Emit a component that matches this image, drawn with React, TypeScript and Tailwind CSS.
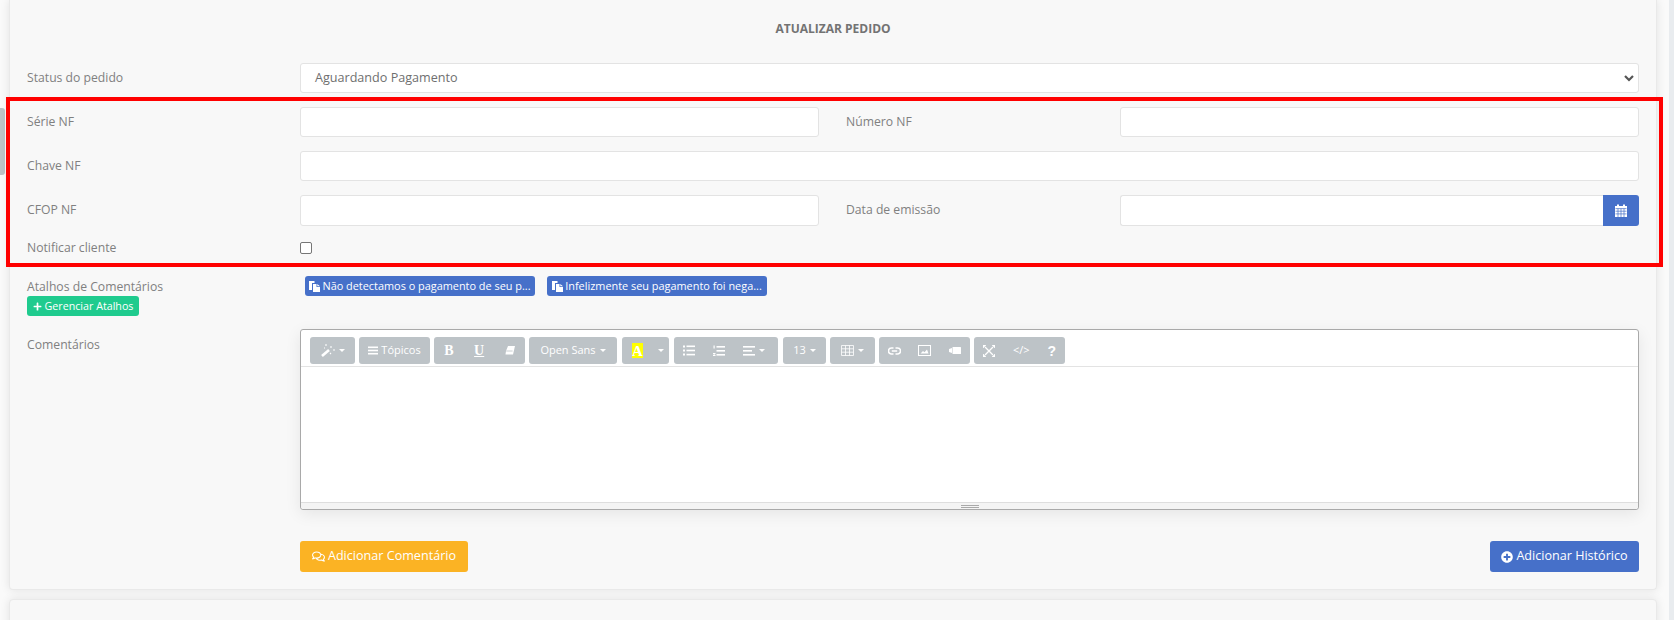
import type { ReactNode } from 'react';
import { FaRegComments, FaPlus, FaPlusCircle } from 'react-icons/fa';

const Caret = () => <span className="ml-[4px] inline-block border-x-[3px] border-t-[3px] border-x-transparent border-t-white" />;

function Label({ children }: { children: ReactNode }) {
  return <label className="block pb-[1px] text-[12.2px] leading-[18px] text-[#808080]">{children}</label>;
}

const inputCls = 'h-[30px] w-full rounded-[3px] border border-[#e3e3e3] bg-white';

function ToolGroup({ width, children }: { width: string; children: ReactNode }) {
  return <div className={`flex h-[27px] items-center justify-around rounded-[3px] bg-[#bdc3c7] text-[11px] text-white ${width}`}>{children}</div>;
}

/* toolbar + misc icons, drawn to match the summernote font glyphs */
const WandIcon = () => (
  <svg width="14" height="13" viewBox="0 0 14 13" fill="none" stroke="white">
    <path d="M1 12l7-6" strokeWidth="2.6" />
    <path d="M5 0v2M10 2v2M12 6h2M9 9l1 1M3 4h1" strokeWidth="1.1" />
  </svg>
);
const BarsIcon = () => (
  <svg width="10" height="9" viewBox="0 0 10 9" fill="white">
    <rect width="10" height="1.6" y="0.5" /><rect width="10" height="1.6" y="3.7" /><rect width="10" height="1.6" y="6.9" />
  </svg>
);
const EraserIcon = () => (
  <svg width="10" height="9" viewBox="0 0 10 9" fill="white">
    <path d="M3 0h7L8 8.5H0.5L1 5z" />
    <path d="M1.2 5h6.4" stroke="#bdc3c7" strokeWidth="0.8" />
  </svg>
);
const UlIcon = () => (
  <svg width="12" height="11" viewBox="0 0 12 11" fill="white">
    <rect y="0.5" width="2" height="2" /><rect x="3.5" y="0.5" width="8.5" height="1.6" />
    <rect y="4.5" width="2" height="2" /><rect x="3.5" y="4.7" width="8.5" height="1.6" />
    <rect y="8.5" width="2" height="2" /><rect x="3.5" y="8.8" width="8.5" height="1.6" />
  </svg>
);
const OlIcon = () => (
  <svg width="12" height="12" viewBox="0 0 12 12" fill="white">
    <path d="M0.5 0.5h1.2v3H0.5zM0 8h2.5v1L1 10h1.5v1H0v-1l1.5-1H0z" />
    <rect x="3.5" y="1" width="8.5" height="1.6" /><rect x="3.5" y="5" width="8.5" height="1.6" /><rect x="3.5" y="9" width="8.5" height="1.6" />
  </svg>
);
const AlignIcon = () => (
  <svg width="12" height="10" viewBox="0 0 12 10" fill="white">
    <rect width="12" height="1.6" /><rect y="4" width="9" height="1.6" /><rect y="8" width="12" height="1.6" />
  </svg>
);
const TableIcon = () => (
  <svg width="13" height="11" viewBox="0 0 13 11" fill="none" stroke="white" strokeWidth="0.8">
    <path d="M.5.5h12v10H.5zM.5 3.8h12M.5 7.2h12M4.5.5v10M8.5.5v10" />
  </svg>
);
const LinkIcon = () => (
  <svg width="13" height="8" viewBox="0 0 13 8" fill="none" stroke="white" strokeWidth="1.5">
    <path d="M5.5 1H3.5a2.9 2.9 0 0 0 0 6h2M7.5 1h2a2.9 2.9 0 0 1 0 6h-2M3.8 4h5.4" />
  </svg>
);
const ImageIcon = () => (
  <svg width="13" height="11" viewBox="0 0 13 11" fill="none">
    <rect x=".5" y=".5" width="12" height="10" stroke="white" />
    <path d="M2.5 8.5l2.5-2.5 1.5 1.2L9 4.5l1.5 4z" fill="white" />
  </svg>
);
const VideoIcon = () => (
  <svg width="12" height="7" viewBox="0 0 12 7" fill="white">
    <path d="M0 2L3 1v5L0 5z" /><rect x="3.5" width="8.5" height="7" rx="0.5" />
  </svg>
);
const ExpandIcon = () => (
  <svg width="12" height="12" viewBox="0 0 12 12" fill="white" stroke="white">
    <path d="M2 2l8 8M10 2L2 10" strokeWidth="1.3" />
    <path d="M0 0h3L0 3zM12 0v3L9 0zM0 12V9l3 3zM12 12H9l3-3z" strokeWidth="0.6" />
  </svg>
);
const CopyIcon = () => (
  <svg width="11" height="11" viewBox="0 0 11 11" fill="white">
    <path d="M0 0h5.5v2H3v7H0z" />
    <path d="M4 3h3.5v3H11v5H4zM8.3 3l2.7 2.3H8.3z" />
  </svg>
);
const CalendarIcon = () => (
  <svg width="12" height="13" viewBox="0 0 12 13">
    <path d="M0 2h2V0.5h2V2h4V0.5h2V2h2v11H0z" fill="white" />
    <path d="M0.5 4.6h11M0.5 7.2h11M0.5 9.9h11M3 4.6V13M6 4.6V13M9 4.6V13" stroke="#4670c9" strokeWidth="0.7" />
  </svg>
);

export default function App() {
  return (
    <div className="relative h-[620px] w-full overflow-hidden bg-[#fafafa] font-['Open_Sans',sans-serif]">
      {/* side strips */}
      <div className="absolute left-0 top-[108px] h-[67px] w-[5px] rounded-r-[3px] bg-[#bdc3c7]" />
      <div className="absolute right-0 top-0 h-full w-[5px] bg-[#e9ecef]" />

      <div className="relative ml-[9px] h-[590px] w-[1648px] rounded-b-[4px] border border-t-0 border-[#e9e9e9] bg-[#f8f8f8] pl-[17px] pr-[17px] shadow-[0_0_10px_rgba(0,0,0,0.1)]">
        <h3 className="pt-[20px] text-center text-[12px] font-bold leading-[18px] text-[#737373]">ATUALIZAR PEDIDO</h3>

        <div className="mt-[25px] grid grid-cols-[273px_1fr] items-center">
          <Label>Status do pedido</Label>
          <div className="flex h-[30px] items-center justify-between rounded-[3px] border border-[#e3e3e3] bg-white pl-[14px] pr-[3px] text-[12.6px] text-[#6f6f6f]">
            Aguardando Pagamento
            <svg width="12" height="12" viewBox="0 0 12 12" fill="none" stroke="#555" strokeWidth="2.2"><path d="M2 4l4 4 4-4" /></svg>
          </div>
        </div>

        <div className="mt-[14px] grid grid-cols-[273px_519px_27px_274px_1fr] items-center gap-y-[14px]">
          <Label>Série NF</Label>
          <div className={inputCls} />
          <div />
          <Label>Número NF</Label>
          <div className={inputCls} />

          <Label>Chave NF</Label>
          <div className={`col-span-4 ${inputCls}`} />

          <Label>CFOP NF</Label>
          <div className={`${inputCls} h-[31px]`} />
          <div />
          <Label>Data de emissão</Label>
          <div className="flex h-[31px]">
            <div className="flex-1 rounded-l-[3px] border border-r-0 border-[#e3e3e3] bg-white" />
            <button className="flex w-[36px] items-center justify-center rounded-r-[3px] bg-[#4670c9] text-white">
              <CalendarIcon />
            </button>
          </div>
        </div>

        <div className="mt-[12px] grid grid-cols-[273px_1fr] items-center">
          <div className="pt-[1px]"><Label>Notificar cliente</Label></div>
          <input type="checkbox" className="h-[12px] w-[12px] appearance-none rounded-[2px] border border-[#767676] bg-white" />
        </div>

        <div className="mt-[18px] grid grid-cols-[278px_1fr]">
          <div className="pt-[2px]">
            <label className="block text-[12.2px] leading-[18px] text-[#808080]">Atalhos de Comentários</label>
            <button className="flex h-[20px] w-[112px] items-center justify-center gap-[3px] rounded-[3px] bg-[#1fcb8e] text-[10.7px] text-white">
              <FaPlus size={9} /> Gerenciar Atalhos
            </button>
          </div>
          <div className="flex items-start gap-[12px]">
            <button className="flex h-[20px] w-[230px] items-center justify-center gap-[2px] rounded-[3px] bg-[#4670c9] text-[10.9px] text-white">
              <CopyIcon /> Não detectamos o pagamento de seu p...
            </button>
            <button className="flex h-[20px] w-[220px] items-center justify-center gap-[2px] rounded-[3px] bg-[#4670c9] text-[10.9px] text-white">
              <CopyIcon /> Infelizmente seu pagamento foi nega...
            </button>
          </div>
        </div>

        <div className="mt-[13px] grid grid-cols-[273px_1fr]">
          <div className="pt-[7px]"><Label>Comentários</Label></div>
          <div className="flex h-[181px] flex-col rounded-[3px] border border-[#a9a9a9] bg-white shadow-[0_4px_16px_rgba(0,0,0,0.08)]">
            <div className="flex h-[37px] shrink-0 items-start gap-[4px] border-b border-[#e3e3e3] pl-[9px] pt-[7px]">
              <ToolGroup width="w-[45px] !justify-center"><WandIcon /><Caret /></ToolGroup>
              <ToolGroup width="w-[71px] !justify-center gap-[3px]"><BarsIcon />Tópicos</ToolGroup>
              <ToolGroup width="w-[91px]">
                <span className="font-['Liberation_Serif',serif] text-[14px] font-bold leading-none">B</span>
                <span className="font-['Liberation_Serif',serif] text-[14px] font-bold leading-none underline">U</span>
                <EraserIcon />
              </ToolGroup>
              <ToolGroup width="w-[88px] !justify-center">Open Sans<Caret /></ToolGroup>
              <div className="ml-px flex h-[27px] w-[47px] items-center rounded-[3px] bg-[#bdc3c7] pl-[10px] text-white">
                <span className="h-[15px] w-[11px] bg-[#ffff00] text-center font-['Liberation_Serif',serif] text-[15px] font-bold leading-[16px]">A</span>
                <span className="ml-[15px] inline-block border-x-[3px] border-t-[3px] border-x-transparent border-t-white" />
              </div>
              <div className="ml-px flex h-[27px] w-[104px] items-center rounded-[3px] bg-[#bdc3c7] pl-[9px]">
                <span className="w-[30px]"><UlIcon /></span>
                <span className="w-[30px]"><OlIcon /></span>
                <span className="flex items-center"><AlignIcon /><Caret /></span>
              </div>
              <ToolGroup width="ml-px w-[43px] !justify-center">13<Caret /></ToolGroup>
              <ToolGroup width="w-[45px] !justify-center"><TableIcon /><Caret /></ToolGroup>
              <ToolGroup width="w-[91px]"><LinkIcon /><ImageIcon /><VideoIcon /></ToolGroup>
              <ToolGroup width="w-[91px]">
                <ExpandIcon />
                <span>&lt;/&gt;</span>
                <span className="font-['Liberation_Sans',sans-serif] text-[14px] font-bold leading-none">?</span>
              </ToolGroup>
            </div>
            <div className="flex-1" />
            <div className="flex h-[7px] shrink-0 flex-col items-center justify-center gap-[1px] rounded-b-[3px] border-t border-[#dedede] bg-[#f4f4f4]">
              <span className="h-px w-[18px] bg-[#a9a9a9]" />
              <span className="h-px w-[18px] bg-[#a9a9a9]" />
            </div>
          </div>
        </div>

        <div className="ml-[273px] mt-[31px] flex justify-between">
          <button className="flex h-[31px] w-[168px] items-center justify-center gap-[3px] rounded-[3px] bg-[#fbb324] text-[12.6px] text-white">
            <FaRegComments size={13} /> Adicionar Comentário
          </button>
          <button className="flex h-[31px] w-[149px] items-center justify-center gap-[3px] rounded-[3px] bg-[#4670c9] text-[12.6px] text-white">
            <FaPlusCircle size={12} /> Adicionar Histórico
          </button>
        </div>
      </div>

      <div className="ml-[9px] mt-[9px] h-[40px] w-[1648px] rounded-t-[4px] border border-[#e9e9e9] bg-[#f8f8f8] shadow-[0_0_10px_rgba(0,0,0,0.1)]" />

      {/* highlight drawn over the form */}
      <div className="pointer-events-none absolute left-[6px] top-[97px] h-[170px] w-[1657px] border-4 border-[#ff0000]" />
    </div>
  );
}
